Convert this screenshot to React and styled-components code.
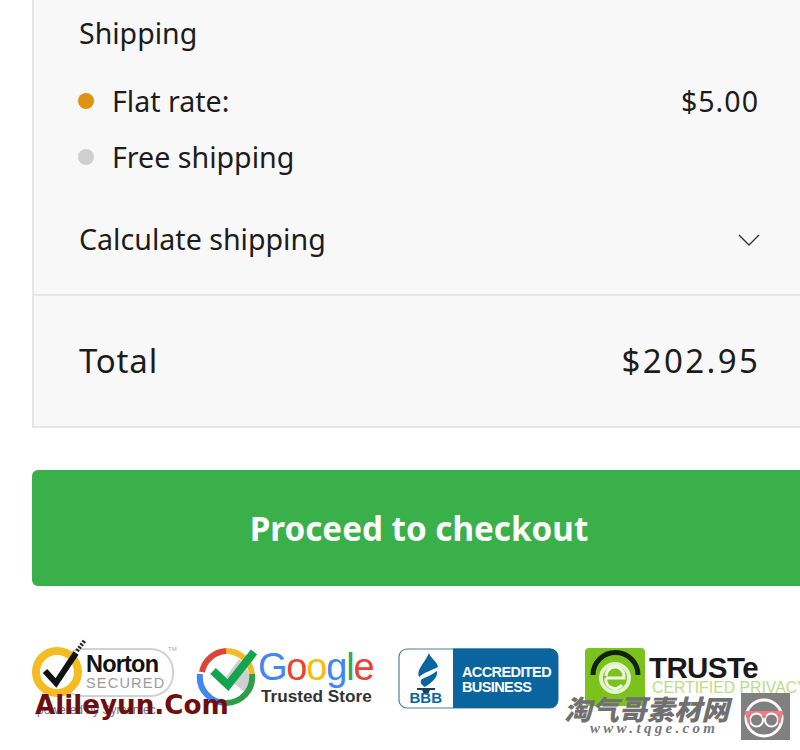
import React from "react";
import styled, { createGlobalStyle } from "styled-components";

const GlobalStyle = createGlobalStyle`
  html, body {
    margin: 0;
    width: 800px;
    height: 750px;
    overflow: hidden;
    background: #fff;
  }
  * { box-sizing: border-box; }
`;

const Page = styled.div`
  position: relative;
  width: 800px;
  height: 750px;
  overflow: hidden;
  font-family: "Noto Sans", "Liberation Sans", sans-serif;
  color: #1c1c1c;
`;

const Content = styled.div`
  width: 838px;
  padding: 0 32px;
`;

const Panel = styled.div`
  background: #f8f8f8;
  border-left: 2px solid #e6e6e6;
  border-bottom: 2px solid #e6e6e6;
`;

const ShippingBlock = styled.div`
  padding: 13px 48px 27px 45px;
  border-bottom: 2px solid #e6e6e6;
`;

const BlockTitle = styled.div`
  font-size: 28.5px;
  line-height: 40px;
  margin-bottom: 20px;
`;

const Row = styled.div`
  display: flex;
  align-items: center;
  justify-content: space-between;
  height: 56px;
  font-size: 28.6px;
  line-height: 54px;
  margin-top: ${(p) => p.$top || 0}px;
`;

const RadioLabel = styled.label`
  display: flex;
  align-items: center;
  gap: 18px;
  margin-left: -1px;
`;

const Dot = styled.span`
  width: 16px;
  height: 16px;
  border-radius: 50%;
  background: ${(p) => (p.$on ? "#e09313" : "#cfcfcf")};
`;

const Amount = styled.span`
  letter-spacing: ${(p) => p.$spacing}px;
  margin-right: -${(p) => p.$spacing}px;
`;

const Chevron = styled.svg`
  margin: 2px -2px 0 0;
`;

const TotalBlock = styled.div`
  height: 130px;
  padding: 0 48px 2px 45px;
  display: flex;
  align-items: center;
  justify-content: space-between;
  font-size: 33px;
`;

const TotalLabel = styled.span`
  letter-spacing: 0.8px;
`;

const CheckoutButton = styled.button`
  display: block;
  width: 100%;
  height: 116px;
  margin-top: 42px;
  border: 0;
  border-radius: 6px;
  background: #3ab04b;
  color: #fff;
  font-family: inherit;
  font-size: 33.2px;
  font-weight: 700;
`;

const Badges = styled.div`
  display: flex;
  margin-top: 52px;
  height: 84px;
`;

const Badge = styled.svg`
  display: block;
  flex: none;
  margin-left: ${(p) => p.$gap || 0}px;
`;

const MarkAli = styled.div`
  position: absolute;
  left: 35px;
  top: 687px;
  font-family: "DejaVu Sans", sans-serif;
  font-size: 26.2px;
  line-height: 36px;
  font-weight: 700;
  color: #6d0f10;
`;

const MarkCn = styled.div`
  position: absolute;
  left: 564px;
  top: 691px;
  font-family: "Noto Sans CJK SC", sans-serif;
  font-size: 27.5px;
  line-height: 34px;
  font-weight: 900;
  font-style: italic;
  color: #707070;
`;

const MarkUrl = styled.div`
  position: absolute;
  left: 590px;
  top: 720px;
  font-family: "Liberation Serif", serif;
  font-size: 15px;
  line-height: 16px;
  font-weight: 700;
  font-style: italic;
  letter-spacing: 3.3px;
  color: #777;
`;

const MarkBox = styled.div`
  position: absolute;
  left: 741px;
  top: 693px;
  width: 49px;
  height: 47px;
  background: #808080;
`;

function Norton() {
  return (
    <Badge width="150" height="84" viewBox="0 0 150 84">
      <rect x="28" y="11" width="113" height="47" rx="22" fill="#fff" stroke="#d2d2d2" strokeWidth="2" />
      <circle cx="25" cy="34" r="21" fill="#fff" stroke="#f5bb23" strokeWidth="8" />
      <path d="M13 33 L24 45 L44 15" fill="none" stroke="#111" strokeWidth="6" />
      <path d="M45 13 L53 2" fill="none" stroke="#222" strokeWidth="4" strokeDasharray="2 1.5" />
      <text x="54" y="34" fontFamily="Liberation Sans" fontWeight="700" fontSize="23.5" letterSpacing="-0.8" fill="#111">Norton</text>
      <text x="54" y="50" fontFamily="Liberation Sans" fontSize="14.5" letterSpacing="1.2" fill="#9b9b9b">SECURED</text>
      <text x="136" y="13" fontFamily="Liberation Sans" fontSize="6" fill="#aaa">TM</text>
      <text x="5" y="76" fontFamily="Liberation Sans" fontSize="12" fill="#777">powered by Symantec</text>
    </Badge>
  );
}

function GoogleStore() {
  return (
    <Badge $gap={14} width="180" height="84" viewBox="0 0 180 84">
      <path d="M30 39 L43 21 A26 26 0 0 1 50 55 Z" fill="#cfcfcf" />
      <path d="M6 34 A26 26 0 0 1 30 13" fill="none" stroke="#dc4437" strokeWidth="6" />
      <path d="M30 13 A26 26 0 0 1 56 36" fill="none" stroke="#f1b92c" strokeWidth="6" />
      <path d="M56 36 A26 26 0 0 1 30 65" fill="none" stroke="#2d9d48" strokeWidth="6" />
      <path d="M30 65 A26 26 0 0 1 4 36" fill="none" stroke="#4285f4" strokeWidth="6" />
      <path d="M17 33 L32 47 L58 14" fill="none" stroke="#12a44f" strokeWidth="8" />
      <text x="62" y="42" fontFamily="Liberation Sans" fontSize="38" letterSpacing="-1.2">
        <tspan fill="#4285f4">G</tspan>
        <tspan fill="#ea4335">o</tspan>
        <tspan fill="#fbbc05">o</tspan>
        <tspan fill="#4285f4">g</tspan>
        <tspan fill="#34a853">l</tspan>
        <tspan fill="#ea4335">e</tspan>
      </text>
      <text x="65" y="64" fontFamily="Liberation Sans" fontWeight="700" fontSize="17.2" fill="#333">Trusted Store</text>
    </Badge>
  );
}

function Bbb() {
  return (
    <Badge $gap={22} width="162" height="84" viewBox="0 0 162 84">
      <rect x="1" y="11" width="159" height="59" rx="8" fill="#fff" stroke="#4d7f9c" strokeWidth="1.2" />
      <path d="M55 10.5 H152 A8 8 0 0 1 160 18.5 V62 A8 8 0 0 1 152 70 H55 Z" fill="#0a659f" />
      <path d="M31 15 C32 20 40 24 40 29 C34 32 25 35 21 39 C18 32 26 26 31 15 Z" fill="#0a659f" />
      <path d="M39 33 C40 40 34 44 27 49 C22 46 22 43 24 41 C29 39 35 36 39 33 Z" fill="#0a659f" />
      <rect x="19" y="50" width="18" height="2" fill="#1d3f57" />
      <path d="M24 52 H32 L30 56 H26 Z" fill="#1d3f57" />
      <text x="11.5" y="65" fontFamily="Liberation Sans" fontWeight="700" fontSize="15" fill="#0a659f">BBB</text>
      <text x="64" y="39" fontFamily="Liberation Sans" fontWeight="700" fontSize="14.5" letterSpacing="-0.6" fill="#fff">ACCREDITED</text>
      <text x="64" y="54" fontFamily="Liberation Sans" fontWeight="700" fontSize="14.5" letterSpacing="-0.6" fill="#fff">BUSINESS</text>
    </Badge>
  );
}

function Truste() {
  return (
    <Badge $gap={24} width="220" height="84" viewBox="0 0 220 84">
      <rect x="1" y="10" width="60" height="58" rx="4" fill="#7cc21c" />
      <path d="M9 37 A22 22 0 0 1 54 37" fill="none" stroke="#13220a" strokeWidth="5" />
      <circle cx="31" cy="40" r="14" fill="#7cc21c" stroke="#e4f2cd" strokeWidth="4" />
      <path d="M22 38 A9 9 0 0 1 40 38 V40 H22" fill="none" stroke="#f2f8e6" strokeWidth="3" />
      <path d="M22 40 A9 9 0 0 0 38 47" fill="none" stroke="#f2f8e6" strokeWidth="3" />
      <text x="65" y="40" fontFamily="Liberation Sans" fontWeight="700" fontSize="29.5" letterSpacing="-0.6" fill="#1a1a1a">TRUSTe</text>
      <text x="68" y="55" fontFamily="Liberation Sans" fontSize="15.8" fill="#b9dc86">CERTIFIED PRIVACY</text>
    </Badge>
  );
}

function GlassesLogo() {
  return (
    <svg width="49" height="47" viewBox="0 0 49 47">
      <circle cx="23" cy="25" r="18" fill="none" stroke="#fff" strokeWidth="3" />
      <path d="M4 20 H42" stroke="#f07a80" strokeWidth="4" />
      <circle cx="15.5" cy="27" r="6.5" fill="#808080" stroke="#fff" strokeWidth="2" />
      <circle cx="30.5" cy="27" r="6.5" fill="#808080" stroke="#fff" strokeWidth="2" />
      <path d="M6 21 L8 30 M40 21 L38 30 M21 23 H25" stroke="#f07a80" strokeWidth="3" />
    </svg>
  );
}

export default function App() {
  return (
    <Page>
      <GlobalStyle />
      <Content>
        <Panel>
          <ShippingBlock>
            <BlockTitle>Shipping</BlockTitle>
            <Row>
              <RadioLabel><Dot $on />Flat rate:</RadioLabel>
              <Amount $spacing={1}>$5.00</Amount>
            </Row>
            <Row>
              <RadioLabel><Dot />Free shipping</RadioLabel>
            </Row>
            <Row $top={26}>
              <span>Calculate shipping</span>
              <Chevron width="22" height="14" viewBox="0 0 22 14">
                <path d="M1 2 L11 12 L21 2" fill="none" stroke="#333" strokeWidth="1.4" />
              </Chevron>
            </Row>
          </ShippingBlock>
          <TotalBlock>
            <TotalLabel>Total</TotalLabel>
            <Amount $spacing={2.4}>$202.95</Amount>
          </TotalBlock>
        </Panel>
        <CheckoutButton>Proceed to checkout</CheckoutButton>
        <Badges>
          <Norton />
          <GoogleStore />
          <Bbb />
          <Truste />
        </Badges>
      </Content>
      <MarkAli>Alileyun.Com</MarkAli>
      <MarkCn>淘气哥素材网</MarkCn>
      <MarkUrl>www.tqge.com</MarkUrl>
      <MarkBox><GlassesLogo /></MarkBox>
    </Page>
  );
}
